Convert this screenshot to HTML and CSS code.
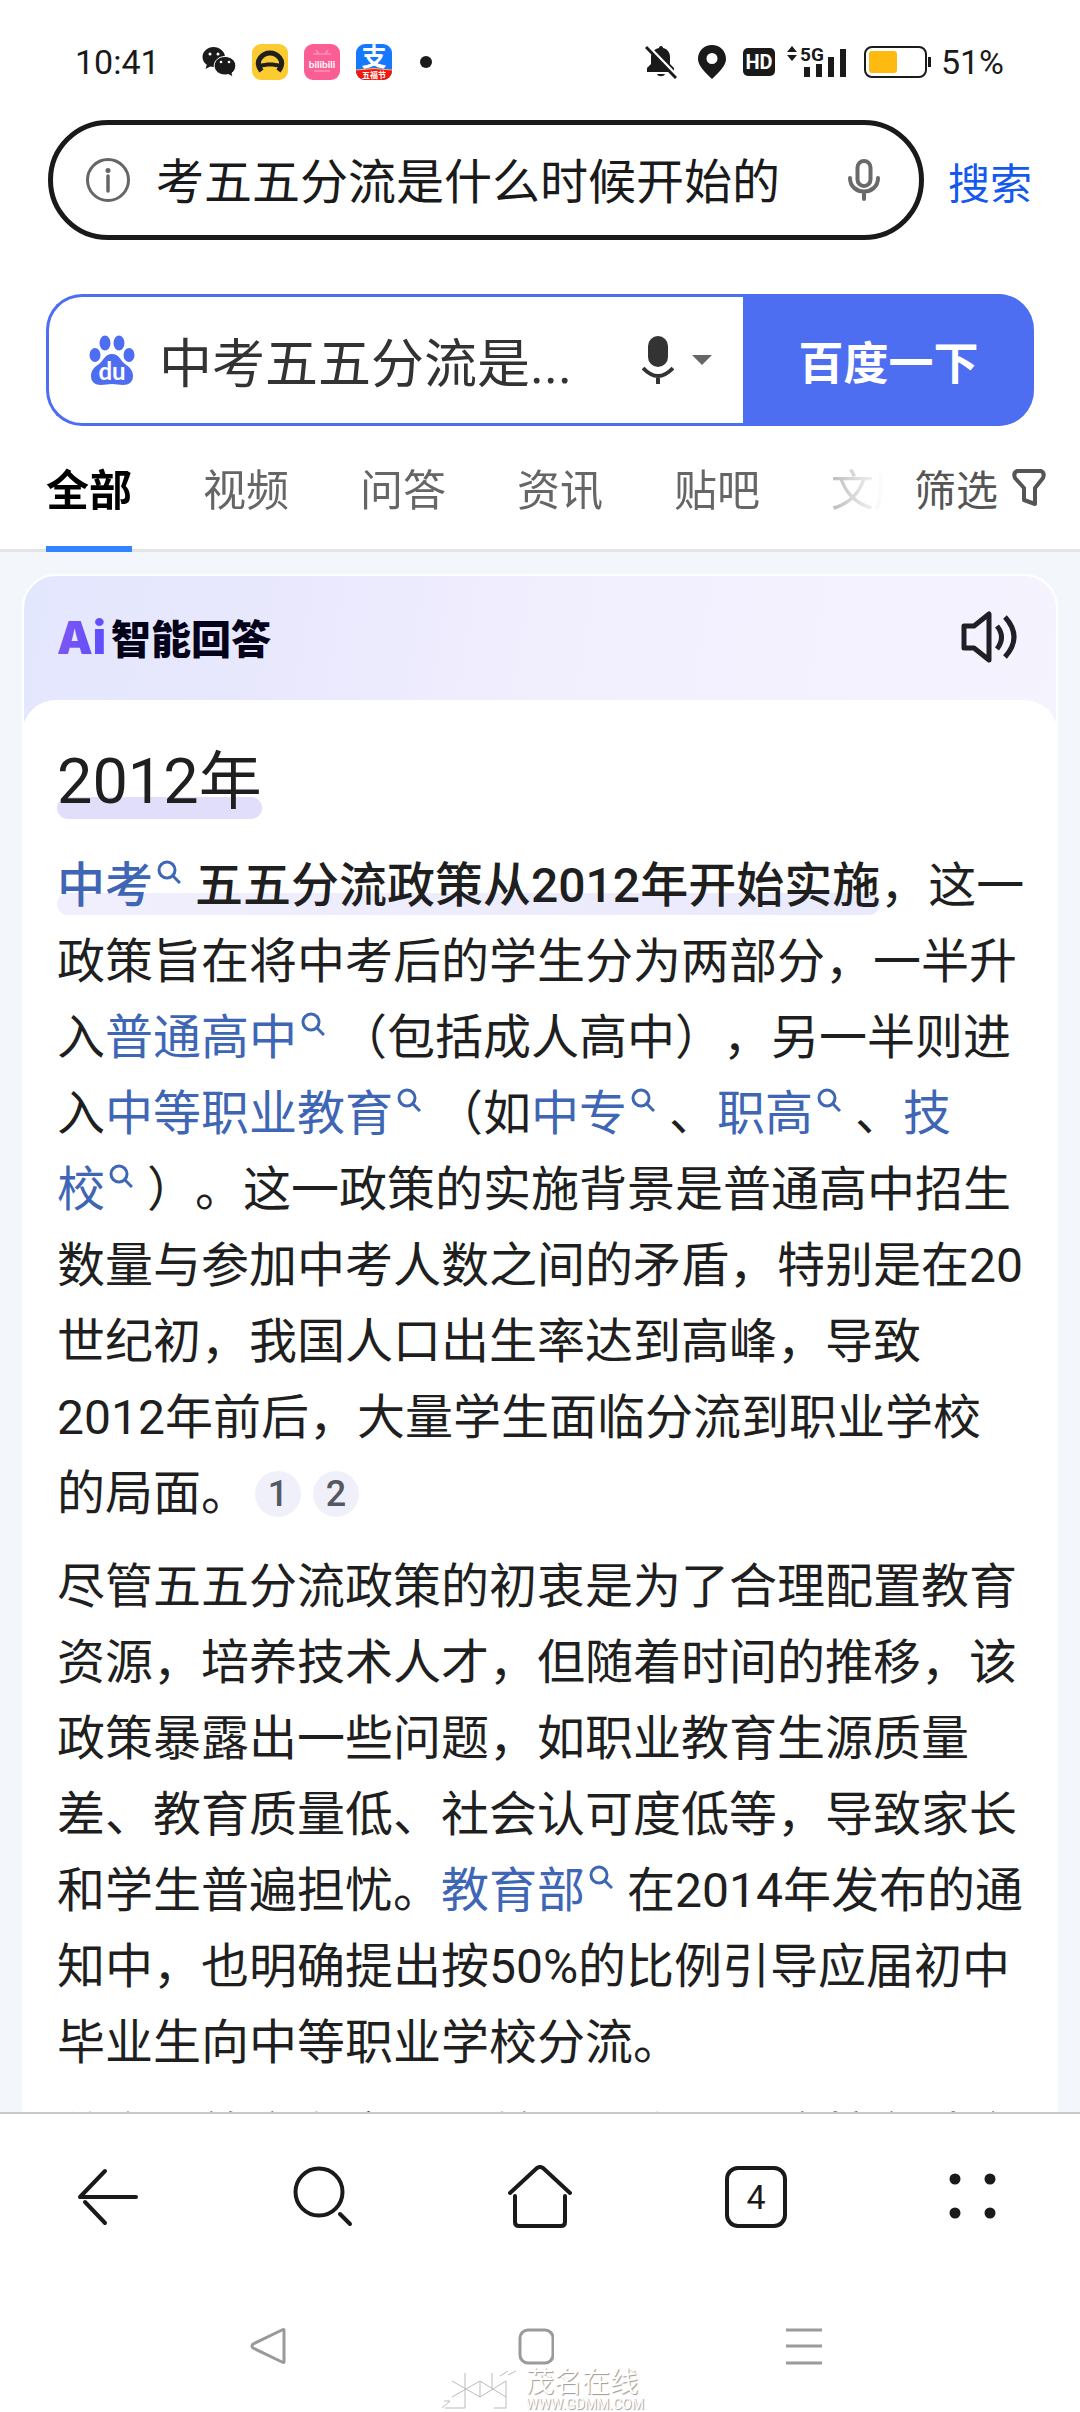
FILE: index.html
```html
<!DOCTYPE html>
<html lang="zh-CN">
<head>
  <meta charset="UTF-8" />
  <meta name="viewport" content="width=device-width, initial-scale=1.0"/>
  <title>中考五五分流是什么时候开始的</title>
  <link rel="stylesheet" href="styles.css">
</head>
<body>
  <svg class="defs" width="0" height="0">
    <symbol id="mag" viewBox="0 0 24 24">
      <circle cx="10" cy="10" r="8" fill="none" stroke="currentColor" stroke-width="3"/>
      <path d="M16 16l7 7" stroke="currentColor" stroke-width="3"/>
    </symbol>
  </svg>

  <div class="status">
    <span class="time">10:41</span>
    <div class="status-apps">
      <svg width="34" height="32" viewBox="0 0 34 32">
        <path d="M11.500 1C5.500 1 0.500 5.500 0.500 11c0 3.300 1.700 6 4.300 7.800L3.500 23l4.800-2.500c1 .3 2.200.5 3.200.5C17.500 21 23 16.500 23 11S17.500 1 11.500 1z" fill="#1a1a1a"/>
        <path d="M23 10.500c-6 0-10.800 4-10.800 9.200S17 29 23 29c1.200 0 2.300-.2 3.300-.5L31 31l-1-4c2.300-1.700 3.800-4.300 3.800-7.300 0-5.200-4.800-9.200-10.800-9.200z" fill="#1a1a1a" stroke="#fff" stroke-width="1"/>
        <circle cx="8" cy="8" r="1.500" fill="#fff"/><circle cx="16" cy="8" r="1.500" fill="#fff"/>
        <circle cx="19" cy="16" r="1.300" fill="#fff"/><circle cx="27" cy="16" r="1.300" fill="#fff"/>
      </svg>
      <svg width="36" height="36" viewBox="0 0 36 36">
        <rect width="36" height="36" rx="9" fill="#fccb2f"/>
        <path d="M9.500 27C1 16 12 9 18 9s17 7 8.500 18" fill="none" stroke="#1f1f1f" stroke-width="5"/>
        <path d="M8 20c6-2 14-2 20 0v4c-6-2-14-2-20 0z" fill="#1f1f1f"/>
      </svg>
      <svg width="36" height="36" viewBox="0 0 36 36">
        <rect width="36" height="36" rx="9" fill="#fb5e94"/>
        <path d="M12 6l3 4M24 6l-3 4M9 10h18M10 27h16" stroke="#fd92b6" stroke-width="1.500"/>
        <text class="bili" x="18" y="24" text-anchor="middle">bilibili</text>
      </svg>
      <svg width="36" height="36" viewBox="0 0 36 36">
        <clipPath id="r"><rect width="36" height="36" rx="9"/></clipPath>
        <g clip-path="url(#r)">
          <rect width="36" height="36" fill="#1677ff"/>
          <path d="M0 26q18-3 36 0v10H0z" fill="#f0190e"/>
          <path d="M0 26q18-3 36 0" fill="none" stroke="#ffb27a" stroke-width="1"/>
          <text class="zhi" x="18" y="22" text-anchor="middle">支</text>
          <text class="fu" x="18" y="34" text-anchor="middle">五福节</text>
        </g>
      </svg>
      <span class="dot"></span>
    </div>
    <div class="status-sys">
      <svg width="32" height="34" viewBox="0 0 32 34">
        <path d="M16 1c1.500 0 2 1 2 2 5 1 7 5 7 9v7l4 4v4H2v-4l4-4v-7c0-4 3-8 8-9 0-1 .5-2 2-2zM12 29h8c-1 3-7 3-8 0z" fill="#1a1a1a"/>
        <path d="M2 0l31 32" stroke="#fff" stroke-width="3"/>
        <path d="M1 2l30 31" stroke="#1a1a1a" stroke-width="3"/>
      </svg>
      <svg class="pin" width="28" height="34" viewBox="0 0 28 34">
        <path fill-rule="evenodd" d="M14 0C6 0 0 6 0 14c0 7 7 13 14 20 7-7 14-13 14-20C28 6 22 0 14 0zm0 8a5.500 5.500 0 110 11 5.500 5.500 0 010-11z" fill="#1a1a1a"/>
      </svg>
      <svg width="32" height="28" viewBox="0 0 32 28">
        <rect width="32" height="28" rx="5" fill="#1a1a1a"/>
        <text class="hd" x="16" y="21" text-anchor="middle">HD</text>
      </svg>
      <svg class="signal" width="60" height="34" viewBox="0 0 60 34">
        <path d="M5 1l5 6H0zM5 16l5-6H0z" fill="#1a1a1a"/>
        <text class="fiveg" x="13" y="16">5G</text>
        <path d="M20 22v10M32 19v13M44 12v20M56 4v28" stroke="#1a1a1a" stroke-width="6"/>
      </svg>
      <svg width="68" height="32" viewBox="0 0 68 32">
        <rect x="1" y="1" width="61" height="30" rx="7" fill="none" stroke="#1a1a1a" stroke-width="2"/>
        <rect x="5" y="5" width="28" height="22" rx="3" fill="#ffba12"/>
        <path d="M65.500 11v10" stroke="#1a1a1a" stroke-width="3"/>
      </svg>
      <span class="time">51%</span>
    </div>
  </div>

  <form class="url-row">
    <div class="url-box">
      <svg width="44" height="44" viewBox="0 0 44 44" fill="none" stroke="#666">
        <circle cx="22" cy="22" r="20.500" stroke-width="3"/>
        <path d="M22 18v15" stroke-width="3.500" stroke-linecap="round"/>
        <circle cx="22" cy="12.500" r="2.500" fill="#666" stroke="none"/>
      </svg>
      <input class="url-input" type="text" aria-label="地址栏" value="考五五分流是什么时候开始的">
      <svg width="32" height="42" viewBox="0 0 32 42" fill="none" stroke="#6a6a6a" stroke-width="4">
        <rect x="9.500" y="2" width="13" height="25" rx="6.500"/>
        <path d="M2 19c0 18 28 18 28 0M16 33v7" stroke-linecap="round"/>
      </svg>
    </div>
    <button class="go" type="button">搜索</button>
  </form>

  <form class="baidu">
    <svg width="46" height="50" viewBox="0 0 46 50">
      <g fill="#4e6ef2">
        <ellipse cx="16" cy="8" rx="5.500" ry="7.500"/>
        <ellipse cx="30" cy="8" rx="5.500" ry="7.500"/>
        <ellipse cx="6" cy="20" rx="5.500" ry="7"/>
        <ellipse cx="40" cy="20" rx="5.500" ry="7"/>
        <path d="M23 19c-7 0-8 6-13 10-5 3-8 7-8 12 0 6 4 9 10 9 4 0 7-1 11-1s7 1 11 1c6 0 10-3 10-9 0-5-3-9-8-12-5-4-6-10-13-10z"/>
      </g>
      <text class="du" x="23" y="45" text-anchor="middle">du</text>
    </svg>
    <input class="baidu-input" type="text" aria-label="百度搜索" value="中考五五分流是...">
    <svg width="32" height="48" viewBox="0 0 32 48">
      <rect x="6" y="0" width="20" height="31" rx="10" fill="#333"/>
      <path d="M1 32q15 16 30 0M16 40v8" fill="none" stroke="#333" stroke-width="4"/>
    </svg>
    <svg class="caret" width="20" height="10" viewBox="0 0 20 10"><path d="M0 0h20L10 10z" fill="#666"/></svg>
    <button class="baidu-btn" type="button">百度一下</button>
  </form>

  <nav class="tabs">
    <div class="tab-list">
      <a href="#" class="tab active">全部</a>
      <a href="#" class="tab">视频</a>
      <a href="#" class="tab">问答</a>
      <a href="#" class="tab">资讯</a>
      <a href="#" class="tab">贴吧</a>
      <a href="#" class="tab">文库</a>
    </div>
    <button class="filter" type="button">
      筛选
      <svg width="34" height="38" viewBox="0 0 34 38" fill="none" stroke="#555" stroke-width="4" stroke-linejoin="round">
        <path d="M5 2h24q4 2 2 7l-8 10v16l-11-4V19L3 9q-2-5 2-7z"/>
      </svg>
    </button>
  </nav>

  <main class="results">
    <article class="card">
      <header class="card-head">
        <span class="ai">Ai</span>
        <span class="ai-title">智能回答</span>
        <button class="speak" type="button" aria-label="朗读">
          <svg width="56" height="52" viewBox="0 0 56 52" fill="none" stroke="#1f1f26" stroke-width="5" stroke-linejoin="round">
            <path d="M3 15h10L28 3v46L13 37H3z"/>
            <path d="M36 15q9 11 0 23M44 6q18 20 0 40"/>
          </svg>
        </button>
      </header>
      <section class="answer">
        <h1 class="answer-title"><span class="mark">2012年</span></h1>
        <p><strong class="mark light"><a href="#">中考<svg class="mag"><use href="#mag"/></svg></a>五五分流政策从2012年开始实施</strong>，这一政策旨在将中考后的学生分为两部分，一半升入<a href="#">普通高中<svg class="mag"><use href="#mag"/></svg></a>（包括成人高中），另一半则进入<a href="#">中等职业教育<svg class="mag"><use href="#mag"/></svg></a>（如<a href="#">中专<svg class="mag"><use href="#mag"/></svg></a>、<a href="#">职高<svg class="mag"><use href="#mag"/></svg></a>、<a href="#">技<span class="keep">校<svg class="mag"><use href="#mag"/></svg></span></a>）。这一政策的实施背景是普通高中招生数量与参加中考人数之间的矛盾，特别是在20世纪初，我国人口出生率达到高峰，导致2012年前后，大量学生面临分流到职业学校的局面。<a href="#" class="cite">1</a><a href="#" class="cite">2</a></p>
        <p>尽管五五分流政策的初衷是为了合理配置教育资源，培养技术人才，但随着时间的推移，该政策暴露出一些问题，如职业教育生源质量差、教育质量低、社会认可度低等，导致家长和学生普遍担忧。<a href="#">教育部<svg class="mag"><use href="#mag"/></svg></a>在2014年发布的通知中，也明确提出按50%的比例引导应届初中毕业生向中等职业学校分流。</p>
        <p>总之，答案在实际上前面已介绍，应按各地方管理部门的规定执行。</p>
      </section>
    </article>
  </main>

  <footer class="bottom">
    <nav class="toolbar">
      <button type="button" aria-label="返回">
        <svg width="64" height="64" viewBox="0 0 64 64" fill="none" stroke="#1a1a1a" stroke-width="4" stroke-linecap="round">
          <path d="M4 32h56M29 6L4 32M9 37l20 21"/>
        </svg>
      </button>
      <button type="button" aria-label="搜索">
        <svg width="64" height="64" viewBox="0 0 64 64" fill="none" stroke="#1a1a1a" stroke-width="4" stroke-linecap="round">
          <circle cx="27" cy="27" r="23.500"/>
          <path d="M48 49l10 10"/>
        </svg>
      </button>
      <button type="button" aria-label="主页">
        <svg width="64" height="64" viewBox="0 0 64 64" fill="none" stroke="#1a1a1a" stroke-width="4" stroke-linecap="round" stroke-linejoin="round">
          <path d="M2 28L29 3q3-2 6 0l27 25M7 31v26q0 4 4 4h42q4 0 4-4V31"/>
        </svg>
      </button>
      <button type="button" aria-label="标签页"><span class="count">4</span></button>
      <button type="button" aria-label="菜单">
        <svg width="64" height="64" viewBox="0 0 64 64" fill="#1a1a1a">
          <circle cx="15" cy="14" r="5.500"/><circle cx="50" cy="14" r="5.500"/>
          <circle cx="15" cy="48" r="5.500"/><circle cx="50" cy="48" r="5.500"/>
        </svg>
      </button>
    </nav>
    <div class="sysnav">
      <svg width="36" height="38" viewBox="0 0 36 38" fill="none" stroke="#9a9a9a" stroke-width="3" stroke-linejoin="round"><path d="M34 3v32q0 1-2 0L3 21q-2-2 0-4L32 3q2-1 2 0z"/></svg>
      <svg width="36" height="38" viewBox="0 0 36 38" fill="none" stroke="#9a9a9a" stroke-width="3"><rect x="2" y="3" width="33" height="33" rx="8"/></svg>
      <svg width="36" height="38" viewBox="0 0 36 38" stroke="#9a9a9a" stroke-width="3"><path d="M0 3h36M0 19h36M0 36h36"/></svg>
    </div>
    <div class="watermark">
      <svg width="78" height="40" viewBox="0 0 78 40" fill="none" stroke="#bbb" stroke-width="1">
        <path d="M0 38l8-7h-6M3 38h20V20M10 11l28 16 26-16M10 27l28-16 26 16M23 3v17M38 11v16M50 3v17M64 11v27H52M58 6l8-5M66 5l8-4"/>
      </svg>
      <div class="wm-text">
        <div class="wm-name">茂名在线</div>
        <div class="wm-url">WWW.GDMM.COM</div>
      </div>
    </div>
  </footer>
</body>
</html>
```

FILE: styles.css
```css
* {
  box-sizing: border-box;
}

body {
  margin: 0;
  height: 100vh;
  display: flex;
  flex-direction: column;
  font-family: Roboto, "Noto Sans CJK SC", sans-serif;
  background: #fff;
  color: #1f1f1f;
  overflow: hidden;
}

svg {
  flex: none;
}

a {
  text-decoration: none;
}

button {
  border: 0;
  padding: 0;
  background: none;
  font-family: inherit;
  cursor: pointer;
}

input {
  flex: 1;
  min-width: 0;
  border: 0;
  padding: 0;
  outline: none;
  background: none;
  font-family: inherit;
}

.defs {
  position: absolute;
}

/* status bar */
.status {
  display: flex;
  align-items: center;
  height: 120px;
  padding: 4px 76px 0 75px;
}

.time {
  font-size: 34px;
  color: #1a1a1a;
}

.status-apps {
  display: flex;
  align-items: center;
  gap: 16px;
  margin-left: 42px;
}

.dot {
  width: 12px;
  height: 12px;
  margin-left: 12px;
  border-radius: 50%;
  background: #1a1a1a;
}

.status-sys {
  display: flex;
  align-items: center;
  gap: 17px;
  margin-left: auto;
}

.pin {
  margin-left: 4px;
}

.signal {
  margin-left: -5px;
}

.status-sys .time {
  margin-left: -8px;
}

.bili {
  font: bold 10px Lato, sans-serif;
  fill: #fff;
}

.zhi {
  font: bold 25px "Noto Sans CJK SC", sans-serif;
  fill: #fff;
}

.fu {
  font: bold 8px "Noto Sans CJK SC", sans-serif;
  fill: #fff;
}

.hd {
  font: bold 20px Roboto, sans-serif;
  fill: #fff;
}

.fiveg {
  font: bold 19px Roboto, sans-serif;
  fill: #1a1a1a;
}

.du {
  font: bold 24px Lato, sans-serif;
  fill: #fff;
}

/* address bar */
.url-row {
  display: flex;
  align-items: center;
  gap: 24px;
  padding: 0 48px;
}

.url-box {
  flex: 1;
  display: flex;
  align-items: center;
  gap: 26px;
  height: 120px;
  padding: 0 39px 0 33px;
  border: 5px solid #1a1a1a;
  border-radius: 60px;
}

.url-input {
  padding-bottom: 5px;
  font-size: 48px;
  color: #1a1a1a;
}

.go {
  font-size: 42px;
  color: #1458ee;
}

/* baidu search box */
.baidu {
  display: flex;
  align-items: center;
  height: 132px;
  margin: 54px 46px 0;
  padding-left: 40px;
  border: 3px solid #4e6ef2;
  border-right: 0;
  border-radius: 36px;
}

.baidu-input {
  margin: 0 16px 0 24px;
  font-size: 53px;
  color: #333;
}

.caret {
  margin: 0 31px 0 18px;
}

.baidu-btn {
  align-self: stretch;
  width: 291px;
  margin: -3px 0;
  border-radius: 0 36px 36px 0;
  background: #4e6ef2;
  font-size: 45px;
  font-weight: bold;
  color: #fff;
}

/* tabs */
.tabs {
  display: flex;
  justify-content: space-between;
  height: 126px;
  padding: 0 34px 0 46px;
  border-bottom: 3px solid #e4e4e8;
}

.tab-list {
  display: flex;
  gap: 71px;
  flex: 1;
  overflow: hidden;
  margin: 0 30px -3px 0;
  mask-image: linear-gradient(to left, transparent, #000 120px);
}

.tab {
  flex: none;
  padding-top: 10px;
  border-bottom: 6px solid transparent;
  font-size: 43px;
  line-height: 110px;
  color: #666;
}

.tab.active {
  border-color: #3385ff;
  font-weight: bold;
  color: #000;
}

.filter {
  display: flex;
  align-items: center;
  gap: 14px;
  font-size: 42px;
  color: #555;
}

/* answer card */
.results {
  flex: 1;
  min-height: 0;
  overflow: hidden;
  padding: 22px 22px 0;
  background: #f3f6fa;
}

.card {
  border: 2px solid #fff;
  border-radius: 34px 34px 0 0;
  background: linear-gradient(100deg, #e3e7fd 0, #e9e8fd 280px, #f1effe 520px, #f6f5fe 100%);
}

.card-head {
  display: flex;
  align-items: center;
  height: 124px;
  padding: 0 39px 2px 33px;
}

.ai {
  font: 900 45px Inter, sans-serif;
  color: transparent;
  background: linear-gradient(100deg, #8257f0, #5a4dff);
  background-clip: text;
}

.ai-title {
  margin-left: 5px;
  font-size: 40px;
  font-weight: 900;
  color: #05031a;
}

.speak {
  display: flex;
  margin-left: auto;
}

.answer {
  margin: 0 -2px;
  padding: 36px 32px 0 35px;
  border-radius: 34px 34px 0 0;
  background: #fff;
}

.answer-title {
  margin: 0;
  font-size: 63px;
  font-weight: 400;
  line-height: 92px;
}

.answer p {
  margin: 20px 0 17px;
  font-size: 48px;
  line-height: 76px;
  text-spacing-trim: space-all;
}

.answer p + p {
  margin-top: 0;
}

.answer a {
  color: #3e66b5;
}

.mark {
  position: relative;
  z-index: 0;
  display: inline-block;
}

/* marker stroke under the text */
.mark::before {
  content: "";
  position: absolute;
  z-index: -1;
  left: 0;
  right: 0;
  bottom: 9px;
  height: 22px;
  border-radius: 11px;
  background: #e1defc;
}

.mark.light {
  font-weight: 500;
}

.mark.light::before {
  background: linear-gradient(90deg, #f1effd, #e9eafd);
}

.keep {
  white-space: nowrap;
}

.mag {
  width: 24px;
  height: 24px;
  margin: 0 14px 0 4px;
  vertical-align: 18px;
}

.answer .cite {
  display: inline-block;
  width: 46px;
  margin: 0 6px;
  border-radius: 50%;
  background: #f0f0fa;
  font-size: 36px;
  font-weight: 500;
  line-height: 46px;
  text-align: center;
  vertical-align: 4px;
  color: #555862;
}

/* bottom bars */
.bottom {
  position: relative;
  height: 300px;
  border-top: 2px solid #c9c9c9;
  background: #fff;
}

.toolbar {
  display: grid;
  grid-template-columns: repeat(5, 1fr);
  height: 166px;
}

.toolbar button {
  display: flex;
  align-items: center;
  justify-content: center;
}

.count {
  width: 62px;
  border: 4px solid #1a1a1a;
  border-radius: 13px;
  font-size: 34px;
  line-height: 54px;
  text-align: center;
  color: #1a1a1a;
}

.sysnav {
  display: grid;
  grid-template-columns: repeat(3, 1fr);
  justify-items: center;
  padding: 47px 142px 0 134px;
}

.watermark {
  position: absolute;
  left: 442px;
  bottom: 0;
  display: flex;
  gap: 6px;
}

.wm-text {
  color: #fff;
  text-shadow: 1px 1px 1px #999;
}

.wm-name {
  font-size: 28px;
  line-height: 26px;
}

.wm-url {
  font-size: 14px;
  line-height: 16px;
}
```
